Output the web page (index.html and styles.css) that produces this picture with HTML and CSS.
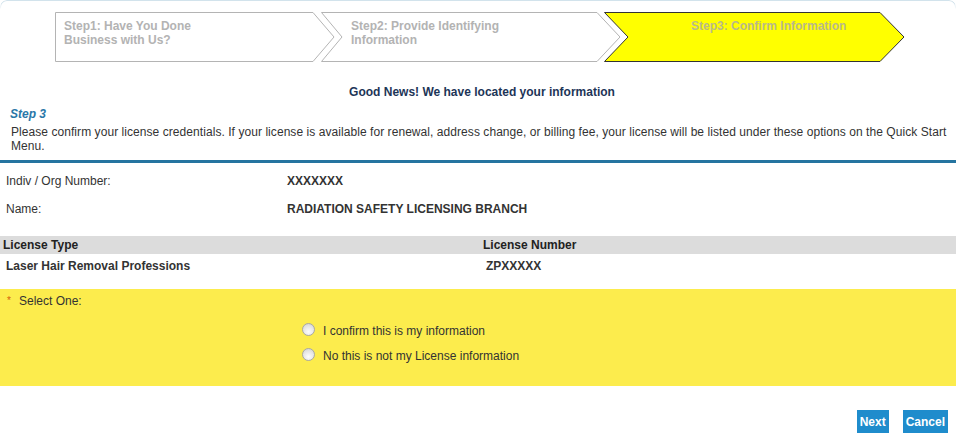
FILE: index.html
```html
<!DOCTYPE html>
<html>
<head>
<meta charset="utf-8">
<link rel="stylesheet" href="styles.css">
</head>
<body>
<div class="frame">
  <div class="steps">
    <div class="step step1">
      <svg class="shape" width="280" height="50" viewBox="0 0 280 50"><polygon points="0.5,0.5 258,0.5 279,25 258,49.5 0.5,49.5" fill="#fff" stroke="#b4b4b4"/></svg>
      <span class="step-text">Step1: Have You Done<br>Business with Us?</span>
    </div>
    <div class="step step2">
      <svg class="shape" width="300" height="50" viewBox="0 0 300 50"><polygon points="0.5,0.5 276,0.5 299,25 276,49.5 0.5,49.5 21,25" fill="#fff" stroke="#b4b4b4"/></svg>
      <span class="step-text">Step2: Provide Identifying<br>Information</span>
    </div>
    <div class="step step3">
      <svg class="shape" width="301" height="50" viewBox="0 0 301 50"><polygon points="0.5,0.5 276,0.5 300,25 276,49.5 0.5,49.5 24,25" fill="#ffff00" stroke="#333"/></svg>
      <span class="step-text">Step3: Confirm Information</span>
    </div>
  </div>

  <div class="good-news">Good News! We have located your information</div>

  <div class="intro">
    <div class="step-title">Step 3</div>
    <p class="intro-text">Please confirm your license credentials. If your license is available for renewal, address change, or billing fee, your license will be listed under these options on the Quick Start Menu.</p>
  </div>

  <div class="rule"></div>

  <div class="info">
    <div class="info-row"><span class="info-label">Indiv / Org Number:</span><span class="info-value">XXXXXXX</span></div>
    <div class="info-row"><span class="info-label">Name:</span><span class="info-value">RADIATION SAFETY LICENSING BRANCH</span></div>
  </div>

  <div class="lic-head"><span class="col-type">License Type</span><span class="col-num">License Number</span></div>
  <div class="lic-row"><span class="col-type">Laser Hair Removal Professions</span><span class="col-num">ZPXXXXX</span></div>

  <div class="select">
    <div class="select-label"><span class="req">*</span>Select One:</div>
    <div class="options">
      <label class="option"><input type="radio" name="confirm" class="radio"><span>I confirm this is my information</span></label>
      <label class="option"><input type="radio" name="confirm" class="radio"><span>No this is not my License information</span></label>
    </div>
  </div>

  <div class="actions">
    <button class="btn">Next</button>
    <button class="btn">Cancel</button>
  </div>
</div>
</body>
</html>
```

FILE: styles.css
```css
html, body {
  margin: 0;
  padding: 0;
  background: #fff;
}
body {
  font-family: "Liberation Sans", Arial, sans-serif;
  font-size: 12px;
  line-height: 14px;
  color: #333;
}
.frame {
  position: relative;
  padding-top: 1px;
}
.frame::before {
  content: "";
  position: absolute;
  left: 0;
  right: 0;
  top: 0;
  height: 8px;
  border: 1px solid #d2e3ec;
  border-bottom: none;
  border-radius: 7px 7px 0 0;
  -webkit-mask-image: linear-gradient(to bottom, #000 0%, #000 40%, transparent 100%);
  mask-image: linear-gradient(to bottom, #000 0%, #000 40%, transparent 100%);
}
.steps {
  display: flex;
  margin: 11px 0 0 55px;
  height: 50px;
}
.step {
  position: relative;
  height: 50px;
  flex: none;
}
.step .shape {
  position: absolute;
  left: 0;
  top: 0;
}
.step-text {
  position: relative;
  display: block;
  font-weight: bold;
  color: #b3b3b3;
  padding-top: 7px;
}
.step1 { width: 280px; }
.step1 .step-text { padding-left: 9px; }
.step2 { width: 300px; margin-left: -14px; }
.step2 .step-text { padding-left: 30px; }
.step3 { width: 301px; margin-left: -17px; }
.step3 .step-text { padding-left: 87px; color: #b9b98a; }

.good-news {
  margin-top: 23px;
  text-align: center;
  padding-left: 8px;
  font-weight: bold;
  color: #1d3557;
}
.intro {
  padding: 8px 1px 0 10px;
}
.step-title {
  font-weight: bold;
  font-style: italic;
  color: #2a77a8;
}
.intro-text {
  margin: 4px 0 0 1px;
  letter-spacing: 0.06px;
}
.rule {
  margin-top: 7px;
  height: 3px;
  background: #2574a0;
}
.info {
  padding: 11px 0 0 6px;
}
.info-row {
  display: flex;
  height: 28px;
}
.info-label {
  width: 281px;
}
.info-value {
  font-weight: bold;
}
.lic-head {
  margin-top: 6px;
  height: 18px;
  background: #dcdcdc;
  display: flex;
  align-items: center;
  font-weight: bold;
  color: #222;
  padding-left: 3px;
}
.lic-head .col-type { width: 480px; }
.lic-row {
  display: flex;
  padding: 5px 0 0 6px;
  height: 30px;
  box-sizing: border-box;
  font-weight: bold;
  color: #333;
}
.lic-row .col-type { width: 480px; }
.select {
  margin-top: 5px;
  height: 97px;
  background: #fcec4d;
  box-sizing: border-box;
  padding: 5px 0 0 7px;
}
.select-label {
  display: flex;
  align-items: center;
}
.req {
  color: #d4600a;
  font-size: 10px;
  width: 12px;
}
.options {
  margin: 16px 0 0 294px;
  display: flex;
  flex-direction: column;
  gap: 11px;
}
.option {
  display: flex;
  align-items: center;
  height: 14px;
}
.radio {
  appearance: none;
  -webkit-appearance: none;
  width: 13px;
  height: 13px;
  margin: 0 8px 0 1px;
  border-radius: 50%;
  border: 1px solid #a8a8a8;
  background: radial-gradient(circle at 50% 70%, #fdfdfd 0%, #e6e6e6 55%, #cfcfcf 100%);
  box-sizing: border-box;
  position: relative;
  top: -2px;
}
.actions {
  display: flex;
  justify-content: flex-end;
  gap: 14px;
  padding: 24px 8px 0 0;
}
.btn {
  border: none;
  background: #1f8ccc;
  color: #fff;
  font-family: "Liberation Sans", Arial, sans-serif;
  font-size: 12px;
  font-weight: bold;
  height: 23px;
  padding: 0 3px;
  border-radius: 0;
  cursor: pointer;
}
```
